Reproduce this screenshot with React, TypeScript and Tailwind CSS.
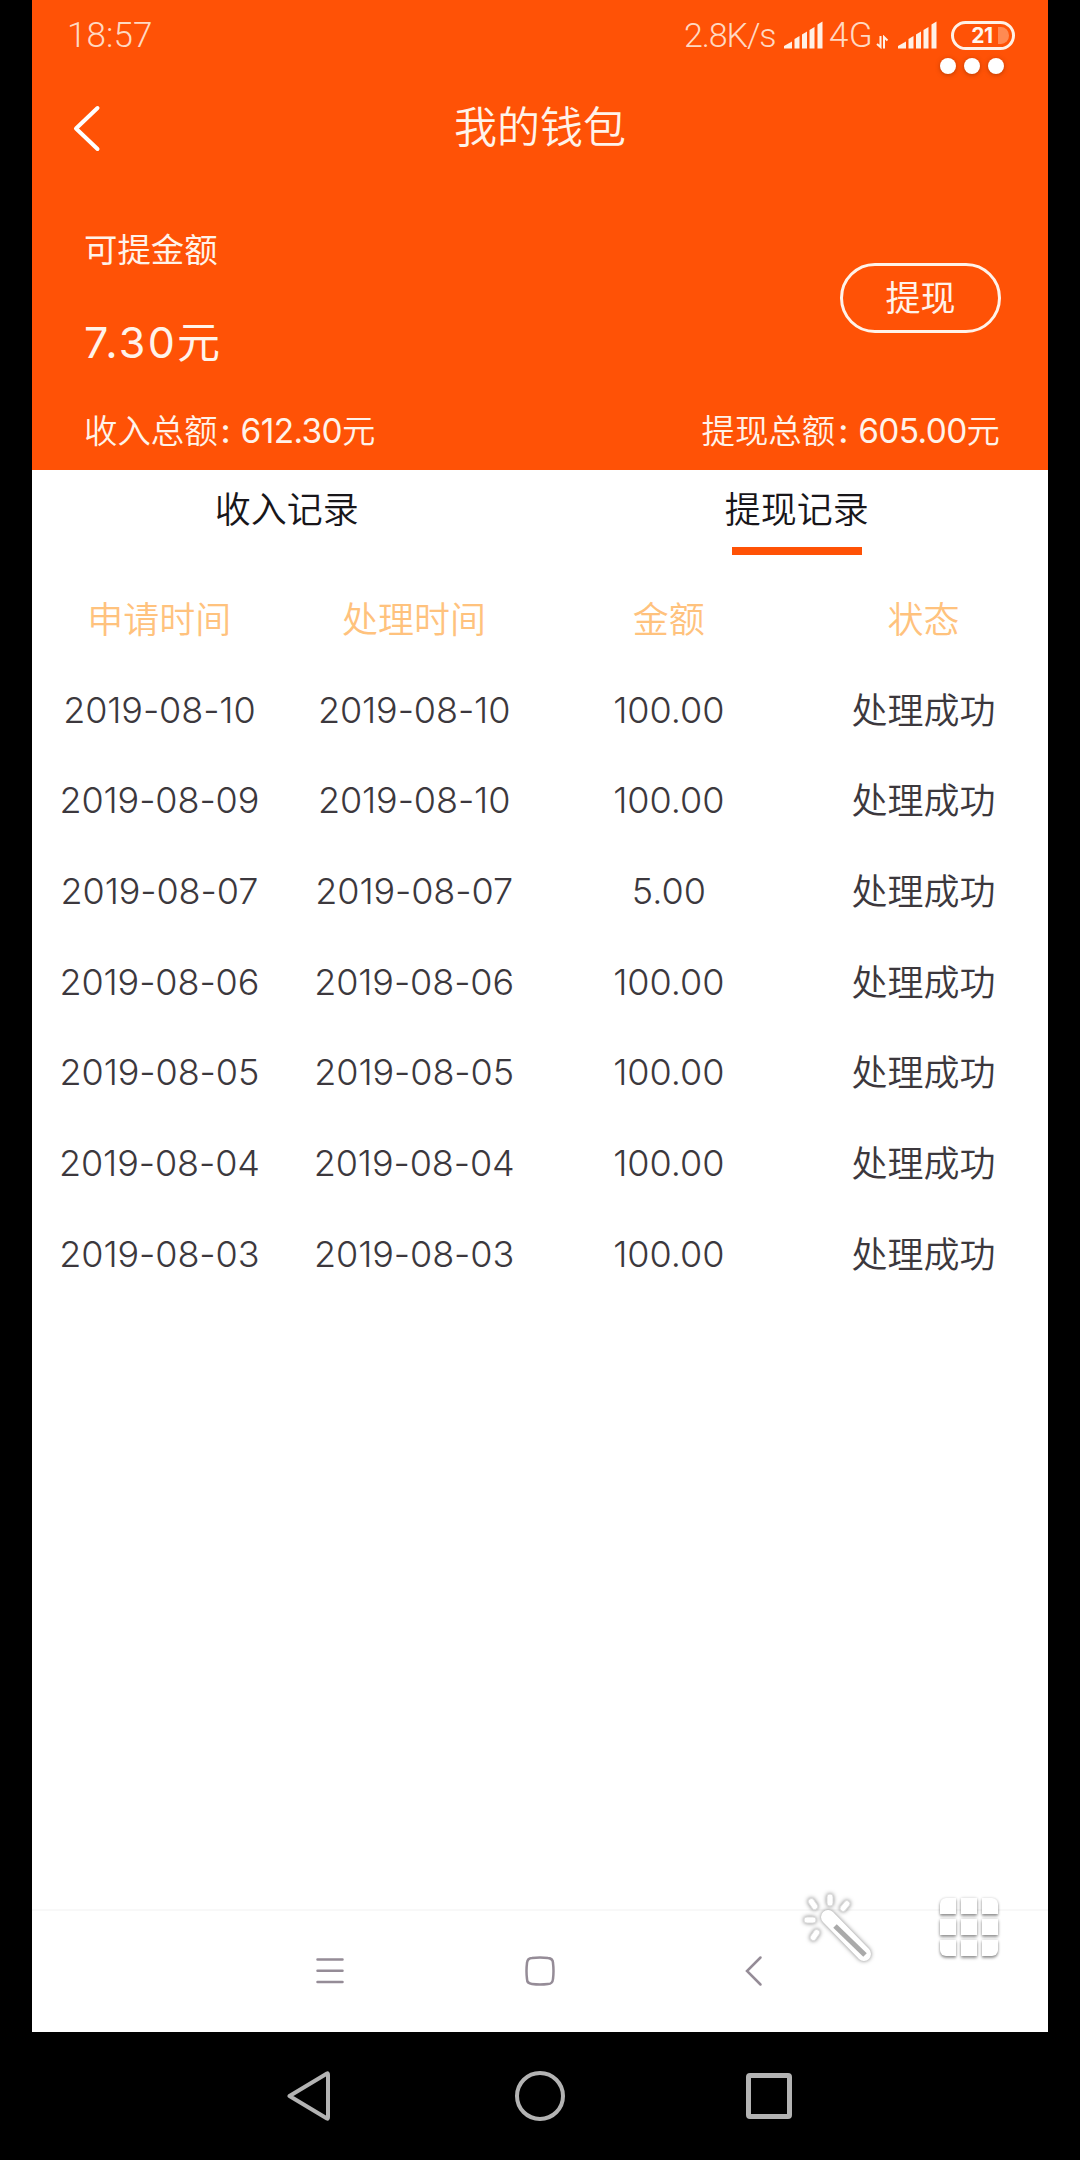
const rows = [
  ['2019-08-10', '2019-08-10', '100.00'],
  ['2019-08-09', '2019-08-10', '100.00'],
  ['2019-08-07', '2019-08-07', '5.00'],
  ['2019-08-06', '2019-08-06', '100.00'],
  ['2019-08-05', '2019-08-05', '100.00'],
  ['2019-08-04', '2019-08-04', '100.00'],
  ['2019-08-03', '2019-08-03', '100.00'],
];

const headings = ['申请时间', '处理时间', '金额', '状态'];

function Signal() {
  return (
    <svg width="39" height="28" viewBox="0 0 39 28" fill="#fff1e6">
      <path d="M0 27.5V25L8 20.5V27.5Z" />
      <path d="M10.5 27.5V18l5-3v12.500Z" />
      <path d="M18 27.500V13.500l5-3v17Z" />
      <path d="M25.500 27.500V9l5-3v21.500Z" />
      <path d="M33.500 27.500V3.500l5-3v27Z" />
    </svg>
  );
}

function StatusBar() {
  return (
    <div className="relative flex h-[72px] justify-between pl-[35px] pr-[33px] pt-[14px] font-['Roboto','Noto_Sans_CJK_SC',sans-serif] font-light text-[#ffd9c2]">
      <span className="text-[35px] leading-[44px] tracking-[0.1px]">18:57</span>
      <div className="flex">
        <span className="mr-[8px] w-[92px] whitespace-nowrap text-[34px] leading-[43px] tracking-[-1.1px]">2.8K/s</span>
        <div className="mr-[6px] pt-[7px]"><Signal /></div>
        <span className="w-[47px] whitespace-nowrap text-[35px] leading-[43px] tracking-[0.3px]">4G</span>
        <svg className="mr-[9px] mt-[21px]" width="13" height="14" viewBox="0 0 13 14" fill="none" stroke="#fff1e6" strokeWidth="2">
          <path d="M4.500 1v11L1 9M8 13.500V2l3.500 3.500" />
        </svg>
        <div className="mr-[14px] pt-[7px]"><Signal /></div>
        <div className="relative mt-[7px] flex h-[29px] w-[64px] items-center justify-center rounded-full border-[3px] border-[#fff1e6]">
          <svg className="absolute right-[3px] top-[3px]" width="11" height="17" viewBox="0 0 11 17">
            <path d="M0 0h3a8 8.500 0 0 1 0 17H0Z" fill="#ff8a52" />
          </svg>
          <span className="relative pr-[2px] font-['Inter',sans-serif] text-[21px] font-bold leading-none tracking-[-0.5px] text-[#fff6ef]">21</span>
        </div>
      </div>
      <div className="absolute right-[44px] top-[58px] flex gap-2">
        {[0, 1, 2].map((i) => (
          <span key={i} className="size-4 rounded-full bg-white shadow-[0_1px_4px_rgba(120,40,0,0.5)]" />
        ))}
      </div>
    </div>
  );
}

function Total({ label, amount }: { label: string; amount: string }) {
  return (
    <p className="flex whitespace-nowrap">
      <span>{label}</span>
      <span className="ml-[3px] mr-[10px] w-[10px] text-center font-medium">:</span>
      <span className="font-normal tracking-[-0.6px]">{amount}</span>
      <span>元</span>
    </p>
  );
}

function Wallet() {
  return (
    <header className="flex h-[470px] flex-col bg-[#ff5206] text-[#fff3ea]">
      <StatusBar />
      <div className="grid h-[112px] grid-cols-[1fr_auto_1fr] items-center pl-[41px] pr-[41px]">
        <svg width="30" height="48" viewBox="0 0 30 48" fill="none" stroke="#fff" strokeWidth="4" strokeLinecap="round" strokeLinejoin="round">
          <path d="M24.500 4L3 24.500L24.500 45" />
        </svg>
        <h1 className="pb-[2px] text-[43px] font-[350] leading-[60px]">我的钱包</h1>
        <span />
      </div>
      <div className="flex justify-between pl-[52px] pr-[47px] pt-[44px]">
        <div>
          <p className="text-[33.4px] leading-[44px]">可提金额</p>
          <p className="mt-[40px] text-[43px] leading-[60px]"><span className="tracking-[2.3px]">7.30</span><span>元</span></p>
        </div>
        <button className="mt-[35px] h-[70px] w-[161px] rounded-full border-[3px] border-[#fff3ea] text-[35px] leading-none">提现</button>
      </div>
      <div className="mt-[37px] flex justify-between pl-[52px] pr-[48px] text-[33.4px] font-[350] leading-[44px]">
        <Total label="收入总额" amount="612.30" />
        <Total label="提现总额" amount="605.00" />
      </div>
    </header>
  );
}

function Tabs() {
  return (
    <div className="grid h-[105px] w-[1019px] grid-cols-2 text-center text-[36px] font-[350] leading-[44px] text-[#18161a]">
      <div className="pt-[18px]">收入记录</div>
      <div className="flex flex-col items-center pl-px pt-[18px]">
        <span>提现记录</span>
        <span className="mt-[15px] h-2 w-[130px] bg-[#ff5206]" />
      </div>
    </div>
  );
}

function Records() {
  return (
    <div className="w-[1019px] text-center text-[36px] font-[350]">
      <div className="grid h-[90.700px] grid-cols-4 items-center text-[#ffc27d]">
        {headings.map((h) => <span key={h}>{h}</span>)}
      </div>
      {rows.map((row, i) => (
        <div key={i} className="grid h-[90.700px] grid-cols-4 items-center whitespace-nowrap text-[#3c383d]">
          {row.map((cell, j) => (
            <span key={j} className={j === 2 ? 'pb-[3px]' : 'pb-[3px] tracking-[-0.1px]'}>{cell}</span>
          ))}
          <span className="pb-px">处理成功</span>
        </div>
      ))}
    </div>
  );
}

const corners: Record<number, string> = {
  0: 'rounded-tl-md',
  2: 'rounded-tr-md',
  6: 'rounded-bl-md',
  8: 'rounded-br-md',
};

function FloatingTools() {
  return (
    <div className="absolute left-[771px] top-[1890px] flex gap-[63px]">
      <svg width="106" height="76" viewBox="0 0 106 76" className="drop-shadow-[0_0_2px_rgba(0,0,0,0.5)]">
        <g fill="#fff">
          <g stroke="#dedede" strokeWidth="1">
            <rect x="56" y="4" width="6" height="12" rx="3" />
            <rect x="39" y="8" width="6" height="12" rx="3" transform="rotate(-35 42 14)" />
            <rect x="71" y="10" width="6" height="12" rx="3" transform="rotate(40 74 16)" />
            <rect x="33" y="27" width="12" height="6" rx="3" />
            <rect x="41" y="39" width="6" height="12" rx="3" transform="rotate(35 44 45)" />
          </g>
          <path d="M57 27L93 64" stroke="#fff" strokeWidth="14" strokeLinecap="round" />
          <path d="M64 36L94 65" stroke="#aaa" strokeWidth="5" />
        </g>
      </svg>
      <div className="mt-2 grid h-[58px] w-[58px] grid-cols-3 gap-[5px]">
        {[0, 1, 2, 3, 4, 5, 6, 7, 8].map((i) => (
          <span key={i} className={`bg-white shadow-[0_2px_3px_rgba(0,0,0,0.4),0_0_3px_rgba(0,0,0,0.16)] ${corners[i] ?? ''}`} />
        ))}
      </div>
    </div>
  );
}

export default function App() {
  return (
    <div className="relative flex h-[2160px] w-[1080px] flex-col overflow-hidden bg-black font-['Inter','Noto_Sans_CJK_SC',sans-serif]">
      <main className="mx-8 flex h-[2032px] flex-col overflow-hidden bg-white">
        <Wallet />
        <Tabs />
        <Records />
        <div className="mt-auto flex h-[123px] shrink-0 items-center border-t-2 border-[#f8f8f8] pb-[2px] pl-[284px]">
          <svg width="28" height="30" viewBox="0 0 28 30" fill="none" stroke="#958c97" strokeWidth="2.500" strokeLinecap="round">
            <path d="M1.500 3.500h25M1.500 14.700h25M1.500 26h25" />
          </svg>
          <svg className="ml-[181px]" width="30" height="30" viewBox="0 0 30 30" fill="none" stroke="#958c97" strokeWidth="2.500">
            <path d="M7 2Q15 1 23 2Q28 2.500 28 7Q29 15 28 23Q27.500 28 23 28Q15 29 7 28Q2 27.500 2 23Q1 15 2 7Q2.500 2 7 2Z" />
          </svg>
          <svg className="ml-[189px]" width="20" height="32" viewBox="0 0 20 32" fill="none" stroke="#958c97" strokeWidth="2.500" strokeLinecap="round">
            <path d="M16.500 2.500L3 16L16.500 29.500" />
          </svg>
        </div>
      </main>
      <nav className="flex h-32 items-center pl-[287px]">
        <svg width="43" height="50" viewBox="0 0 43 50" fill="none" stroke="#b3b3b3" strokeWidth="4" strokeLinejoin="round">
          <path d="M2.500 25L40 2.500Q41 2 41 4V46Q41 48 40 47.500Z" />
        </svg>
        <span className="ml-[185px] size-[50px] rounded-full border-4 border-[#b3b3b3]" />
        <span className="ml-[181px] size-[46px] rounded border-[5px] border-[#b3b3b3]" />
      </nav>
      <FloatingTools />
    </div>
  );
}
